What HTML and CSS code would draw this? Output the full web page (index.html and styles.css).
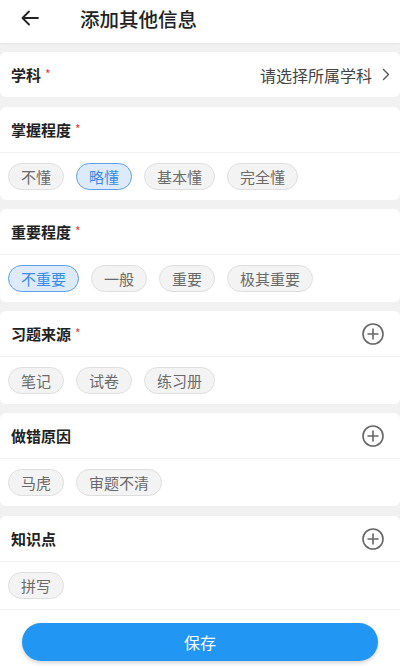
FILE: index.html
```html
<!DOCTYPE html>
<html lang="zh-CN">
<head>
<meta charset="utf-8">
<title>添加其他信息</title>
<link rel="stylesheet" href="styles.css">
</head>
<body>
<div class="page">
  <header class="topbar">
    <svg class="back" width="18" height="16" viewBox="0 0 18 16"><path d="M17 8H2M8 1.5L1.5 8 8 14.5" fill="none" stroke="#222" stroke-width="1.8" stroke-linecap="round" stroke-linejoin="round"/></svg>
    <h1 class="title">添加其他信息</h1>
  </header>
  <main class="content">
    <section class="card first">
      <div class="row">
        <span class="label">学科<span class="req">*</span></span>
        <span class="select">请选择所属学科<svg class="chev" width="8" height="13" viewBox="0 0 8 13"><path d="M1.5 1.5L6.5 6.5 1.5 11.5" fill="none" stroke="#555" stroke-width="1.4" stroke-linecap="round" stroke-linejoin="round"/></svg></span>
      </div>
    </section>
    <section class="card">
      <div class="row"><span class="label">掌握程度<span class="req">*</span></span></div>
      <div class="chips">
        <span class="chip">不懂</span>
        <span class="chip active">略懂</span>
        <span class="chip">基本懂</span>
        <span class="chip">完全懂</span>
      </div>
    </section>
    <section class="card">
      <div class="row"><span class="label">重要程度<span class="req">*</span></span></div>
      <div class="chips">
        <span class="chip active">不重要</span>
        <span class="chip">一般</span>
        <span class="chip">重要</span>
        <span class="chip">极其重要</span>
      </div>
    </section>
    <section class="card">
      <div class="row"><span class="label">习题来源<span class="req">*</span></span><svg class="plus" width="24" height="24" viewBox="0 0 24 24"><circle cx="12" cy="12" r="10" fill="none" stroke="#666" stroke-width="1.6"/><path d="M12 6.5v11M6.5 12h11" stroke="#666" stroke-width="1.6"/></svg></div>
      <div class="chips">
        <span class="chip">笔记</span>
        <span class="chip">试卷</span>
        <span class="chip">练习册</span>
      </div>
    </section>
    <section class="card">
      <div class="row"><span class="label">做错原因</span><svg class="plus" width="24" height="24" viewBox="0 0 24 24"><circle cx="12" cy="12" r="10" fill="none" stroke="#666" stroke-width="1.6"/><path d="M12 6.5v11M6.5 12h11" stroke="#666" stroke-width="1.6"/></svg></div>
      <div class="chips">
        <span class="chip">马虎</span>
        <span class="chip">审题不清</span>
      </div>
    </section>
    <section class="card last">
      <div class="row"><span class="label">知识点</span><svg class="plus" width="24" height="24" viewBox="0 0 24 24"><circle cx="12" cy="12" r="10" fill="none" stroke="#666" stroke-width="1.6"/><path d="M12 6.5v11M6.5 12h11" stroke="#666" stroke-width="1.6"/></svg></div>
      <div class="chips">
        <span class="chip">拼写</span>
      </div>
    </section>
  </main>
  <footer class="footer">
    <button class="save">保存</button>
  </footer>
</div>
</body>
</html>
```

FILE: styles.css
```css
* { box-sizing: border-box; }
html, body { margin: 0; padding: 0; }
body {
  font-family: "Noto Sans CJK SC", "Noto Sans", sans-serif;
  background: #f1f1f1;
  color: #222;
  width: 400px;
  height: 666px;
  overflow: hidden;
}
.page { display: flex; flex-direction: column; height: 666px; }
.topbar {
  height: 43px;
  background: #fff;
  display: flex;
  align-items: center;
  padding-left: 21px;
  box-shadow: 0 1px 2px rgba(0,0,0,0.06);
  position: relative;
  z-index: 1;
}
.back { margin-top: -8px; }
.title {
  margin: -7px 0 0 41px;
  font-size: 19.5px;
  font-weight: 500;
  color: #222;
}
.content {
  flex: 1;
  padding-top: 9px;
  display: flex;
  flex-direction: column;
  gap: 9px;
}
.card { background: #fff; border-radius: 6px; }
.card.first { margin-bottom: 1px; }
.card.last { border-radius: 6px 6px 0 0; margin-top: 1px; }
.row {
  height: 45px;
  display: flex;
  align-items: center;
  justify-content: space-between;
  padding: 0 16px 0 11px;
}
.card .row + .chips { border-top: 1px solid #f2f2f2; }
.label { font-size: 15px; font-weight: 700; color: #222; display: flex; align-items: center; }
.req { color: #e53935; font-size: 12px; font-weight: 400; margin-left: 4px; margin-top: -2px; }
.select { font-size: 16px; color: #444; display: flex; align-items: center; gap: 10px; margin-right: -6px; }
.plus { margin-right: -1px; }
.chips {
  display: flex;
  gap: 12px;
  padding: 10px 8px;
}
.chip {
  height: 27px;
  line-height: 25px;
  padding: 0 12px;
  border-radius: 14px;
  border: 1px solid #dedede;
  background: #f3f3f3;
  color: #6a6a6a;
  font-size: 15px;
}
.chip.active {
  background: #dceafb;
  border-color: #5b9ee8;
  color: #3a8ae6;
}
.footer {
  background: #fff;
  height: 56px;
  padding: 13px 22px 0;
}
.save {
  width: 100%;
  height: 38px;
  border: none;
  border-radius: 19px;
  background: #2196f3;
  color: #fff;
  font-family: "Noto Sans CJK SC", sans-serif;
  font-size: 16px;
  box-shadow: 0 2px 4px rgba(0,0,0,0.18);
}
```
